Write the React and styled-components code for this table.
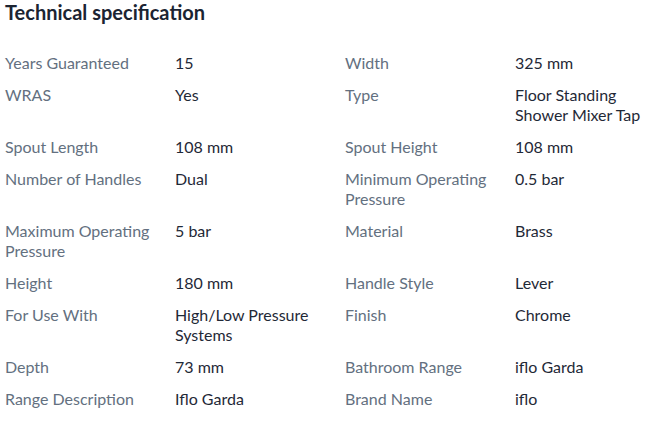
import styled, { createGlobalStyle } from "styled-components";

const specs = [
  ["Years Guaranteed", "15", "Width", "325 mm"],
  ["WRAS", "Yes", "Type", "Floor Standing Shower Mixer Tap"],
  ["Spout Length", "108 mm", "Spout Height", "108 mm"],
  ["Number of Handles", "Dual", "Minimum Operating Pressure", "0.5 bar"],
  ["Maximum Operating Pressure", "5 bar", "Material", "Brass"],
  ["Height", "180 mm", "Handle Style", "Lever"],
  ["For Use With", "High/Low Pressure Systems", "Finish", "Chrome"],
  ["Depth", "73 mm", "Bathroom Range", "iflo Garda"],
  ["Range Description", "Iflo Garda", "Brand Name", "iflo"],
];

const App = () => {
  return (
    <>
      <GlobalStyle />
      <Section>
        <Title>Technical specification</Title>
        <SpecGrid>
          {specs.map(([l1, v1, l2, v2]) => (
            <Row key={l1}>
              <Label>{l1}</Label>
              <Value>{v1}</Value>
              <Label>{l2}</Label>
              <Value>{v2}</Value>
            </Row>
          ))}
        </SpecGrid>
      </Section>
    </>
  );
};

const GlobalStyle = createGlobalStyle`
  body {
    margin: 0;
    background: #fff;
    font-family: Lato, "Open Sans", sans-serif;
  }
`;

const Section = styled.section`
  padding: 0 0 0 5px;
`;

const Title = styled.h2`
  margin: 0 0 29px 0;
  font-size: 20px;
  line-height: 24px;
  font-weight: 700;
  color: #1b2432;
`;

const SpecGrid = styled.div`
  display: flex;
  flex-direction: column;
  gap: 12px;
`;

const Row = styled.div`
  display: grid;
  grid-template-columns: 170px 170px 170px 1fr;
`;

const Label = styled.div`
  font-size: 16px;
  line-height: 20px;
  color: #637080;
  padding-right: 12px;
`;

const Value = styled.div`
  font-size: 16px;
  line-height: 20px;
  color: #1f2937;
  padding-right: 12px;
`;

export default App;
